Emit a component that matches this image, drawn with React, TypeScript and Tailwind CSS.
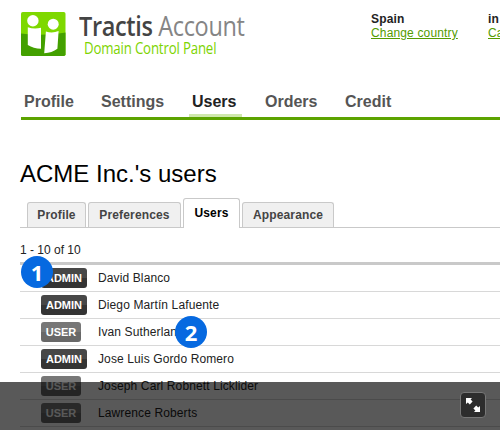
type User = { role: 'ADMIN' | 'USER'; name: string };

const users: User[] = [
  { role: 'ADMIN', name: 'David Blanco' },
  { role: 'ADMIN', name: 'Diego Martín Lafuente' },
  { role: 'USER', name: 'Ivan Sutherland' },
  { role: 'ADMIN', name: 'Jose Luis Gordo Romero' },
  { role: 'USER', name: 'Joseph Carl Robnett Licklider' },
  { role: 'USER', name: 'Lawrence Roberts' },
];

function Logo() {
  return (
    <svg width="45" height="45" viewBox="0 0 45 45" className="shrink-0">
      <defs>
        <clipPath id="logo-frame">
          <rect width="44.5" height="44" rx="1.8" />
        </clipPath>
      </defs>
      <g clipPath="url(#logo-frame)">
        <rect width="45" height="45" fill="#7ed800" />
        <path d="M0 21.5Q22 24.5 45 20.5V45H0Z" fill="#43a000" />
      </g>
      <g fill="#fff">
        <circle cx="11.9" cy="8.7" r="5.7" />
        <circle cx="32.2" cy="12.2" r="5.5" />
        <path d="M6.8 15.2Q13 17.5 20 15.8V36.8Q12.5 36.5 6.8 33Z" />
        <path d="M24.9 19.5Q31.5 21.5 37.6 19L36.4 36.8Q31 41 23.2 41.2Z" />
      </g>
    </svg>
  );
}

function Header() {
  return (
    <header className="flex h-[88px] pl-[21px] pt-3">
      <Logo />
      <div className="ml-[13px] w-[292px] shrink-0 whitespace-nowrap font-['Open_Sans',sans-serif]">
        <div className="h-[27px] w-max origin-left scale-x-[0.87] text-[27px] leading-[27px] tracking-[-0.4px] text-[#858585]">
          <span className="font-semibold text-[#444]">Tractis</span> Account
        </div>
        <div className="ml-[5px] h-[18px] w-max origin-left scale-x-[0.855] text-[15.5px] leading-[18px] tracking-[-0.2px] text-[#7dd400]">
          Domain Control Panel
        </div>
      </div>
      <div className="w-[117px] shrink-0 text-xs leading-[14px] tracking-[0.15px]">
        <div className="font-bold">Spain</div>
        <a className="text-[#549c00] underline">Change country</a>
      </div>
      <div className="w-[60px] shrink-0 whitespace-nowrap text-xs leading-[14px] tracking-[0.15px]">
        <div className="font-bold">in English</div>
        <a className="text-[#549c00] underline">Castellano</a>
      </div>
    </header>
  );
}

function Tab({ label, width, active = false }: { label: string; width: string; active?: boolean }) {
  return (
    <div
      className={
        width +
        ' rounded-t-[3px] border border-b-0 border-[#c9c9c9] text-center tracking-[0.15px] ' +
        (active ? 'mb-[-1px] h-[30px] bg-white pt-[7px] text-black' : 'h-[25px] bg-[#f0f0f0] pt-[5px] text-[#444]')
      }
    >
      {label}
    </div>
  );
}

function Marker({ n }: { n: number }) {
  return (
    <span className="flex size-8 items-center justify-center rounded-full bg-[#0669e0] pb-px font-['Open_Sans',sans-serif] text-[22px] font-bold leading-none text-white">
      {n}
    </span>
  );
}

export default function App() {
  return (
    <main className="relative h-[430px] w-[500px] overflow-hidden bg-white font-['Liberation_Sans',Arial,sans-serif] text-[#222]">
      <Header />
      <nav className="ml-[21px] flex h-8 gap-[21px] border-b-[3px] border-[#5ca300] text-base font-bold leading-[28px] text-[#555]">
        <span className="w-[59px] pl-[3px]">Profile</span>
        <span className="w-[67px]">Settings</span>
        <span className="h-[29px] w-[53px] border-b-[3px] border-[#cfe8ad] pl-[3px] text-[#222]">Users</span>
        <span className="w-[59px] pl-[2px]">Orders</span>
        <span className="pl-[2px]">Credit</span>
      </nav>
      <section className="pl-5">
        <h1 className="pt-[39px] text-2xl leading-[30px] text-black">ACME Inc.'s users</h1>
        <div className="mt-[9px] flex h-[30px] items-end gap-[2px] border-b border-[#c9c9c9] pl-[7px] text-xs font-bold leading-[14px]">
          <Tab label="Profile" width="w-[59px]" />
          <Tab label="Preferences" width="w-[93px]" />
          <Tab label="Users" width="w-[57px]" active />
          <Tab label="Appearance" width="w-[92px]" />
        </div>
        <div className="h-[34px] pt-[15px] text-xs leading-[14px] text-[#222]">1 - 10 of 10</div>
        <div className="border-t-[3px] border-[#c9c9c9]">
          {users.map((u) => (
            <div key={u.name} className="flex h-[27px] items-center border-b border-[#d8d8d8] pl-[21px] text-xs">
              <div className="w-[57px]">
                <span
                  className={
                    'flex h-5 items-center justify-center rounded-[3px] bg-linear-to-b from-50% to-50% text-[11px] font-bold text-white ' +
                    (u.role === 'ADMIN' ? 'w-[46px] from-[#474747] to-[#343434]' : 'w-10 from-[#777] to-[#686868]')
                  }
                >
                  {u.role}
                </span>
              </div>
              <span className="tracking-[0.12px]">{u.name}</span>
            </div>
          ))}
        </div>
      </section>
      <div className="absolute left-[21px] top-[256px]"><Marker n={1} /></div>
      <div className="absolute left-[175px] top-[316px]"><Marker n={2} /></div>
      <div className="absolute inset-x-0 bottom-0 flex h-12 justify-end bg-black/65 pr-[14px] pt-[10px]">
        <button className="flex size-[26px] items-center justify-center rounded-[4px] border border-[#777] bg-[#2d2d2d]">
          <svg width="16" height="16" viewBox="0 0 16 16" fill="#fff">
            <path d="M1 1H7L5.6 2.6L7.6 4.6L4.8 7.4L2.8 5.4L1 7Z" />
            <path d="M15 15H9L10.4 13.4L8.4 11.4L11.2 8.6L13.2 10.6L15 9Z" />
          </svg>
        </button>
      </div>
    </main>
  );
}
